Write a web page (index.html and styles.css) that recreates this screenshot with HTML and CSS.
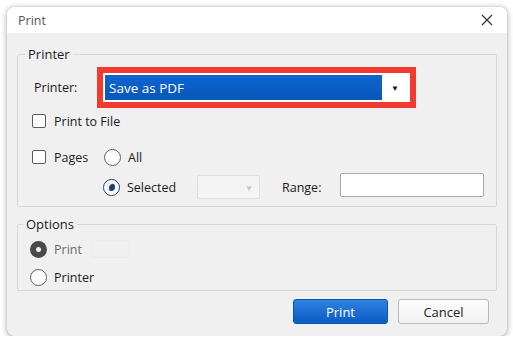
FILE: index.html
```html
<!DOCTYPE html>
<html lang="en">
<head>
  <meta charset="UTF-8" />
  <title>Print</title>
  <link rel="stylesheet" href="styles.css">
</head>
<body>
  <div class="dialog">
    <div class="titlebar">
      <span class="title">Print</span>
      <svg class="close" width="12" height="12" viewBox="0 0 12 12">
        <path d="M1 1 L11 11 M11 1 L1 11" stroke="#333" stroke-width="1.2" fill="none"/>
      </svg>
    </div>

    <div class="content">
      <fieldset class="group printer-group">
        <legend>Printer</legend>

        <div class="row printer-row">
          <span class="label printer-label">Printer:</span>
          <div class="highlight">
            <div class="select">
              <span class="select-value">Save as PDF</span>
              <span class="select-arrow">&#9660;</span>
            </div>
          </div>
        </div>

        <div class="row file-row">
          <span class="checkbox"></span>
          <span class="label">Print to File</span>
        </div>

        <div class="row pages-row">
          <span class="checkbox"></span>
          <span class="label pages-label">Pages</span>
          <span class="radio"></span>
          <span class="label">All</span>
        </div>

        <div class="row selected-row">
          <span class="radio checked"></span>
          <span class="label selected-label">Selected</span>
          <div class="mini-select"><span class="mini-arrow">&#9660;</span></div>
          <span class="label range-label">Range:</span>
          <div class="text-input"></div>
        </div>
      </fieldset>

      <fieldset class="group options-group">
        <legend>Options</legend>

        <div class="row option-row">
          <span class="radio disabled-checked"></span>
          <span class="label muted">Print</span>
          <div class="mini-box"></div>
        </div>

        <div class="row option-row">
          <span class="radio"></span>
          <span class="label">Printer</span>
        </div>
      </fieldset>

      <div class="buttons">
        <button class="btn primary">Print</button>
        <button class="btn">Cancel</button>
      </div>
    </div>
  </div>
</body>
</html>
```

FILE: styles.css
```css
:root {
  --bg: #f0f0f0;
  --line: #d8d8d8;
  --text: #1b1b1b;
  --muted: #6a6a6a;
  --blue: #0b5fc5;
  --red: #f23a31;
}

* {
  box-sizing: border-box;
  margin: 0;
  padding: 0;
}

html, body {
  background: #ffffff;
  font-family: 'Open Sans', 'Noto Sans', sans-serif;
  font-size: 12.5px;
  color: var(--text);
}

body {
  padding: 7px 6px 0 7px;
}

.dialog {
  width: 500px;
  height: 329px;
  background: var(--bg);
  border-radius: 7px;
  overflow: hidden;
  box-shadow: 0 1px 6px rgba(0, 0, 0, 0.35), 0 0 1px rgba(0, 0, 0, 0.3);
}

.titlebar {
  height: 26px;
  background: #ffffff;
  display: flex;
  align-items: center;
  justify-content: space-between;
  padding: 0 14px 0 11px;
}

.title {
  color: #555;
  font-size: 12.5px;
}

.content {
  padding: 12px 10px 0 10px;
}

.group {
  min-width: 0;
  border: 1px solid var(--line);
  border-radius: 2px;
  padding: 4px 0 0 14px;
}

.group legend {
  font-size: 13px;
  line-height: 18px;
  padding: 0 3px;
  margin-left: -7px;
}

.row {
  display: flex;
  align-items: center;
  height: 24px;
}

.label {
  font-size: 12.5px;
  white-space: nowrap;
}

.printer-row {
  height: 41px;
}

.printer-label {
  margin-left: 2px;
  width: 63px;
}

.highlight {
  width: 319px;
  height: 41px;
  border: 6px solid var(--red);
  background: #ffffff;
  padding: 2px;
  display: flex;
}

.select {
  flex: 1;
  display: flex;
  align-items: stretch;
}

.select-value {
  width: 277px;
  background: linear-gradient(#0d66cf, #0956b8);
  color: #ffffff;
  font-size: 13.5px;
  display: flex;
  align-items: center;
  padding-left: 4px;
}

.select-arrow {
  flex: 1;
  font-size: 8px;
  color: #111;
  display: flex;
  align-items: center;
  justify-content: center;
}

.checkbox {
  width: 14px;
  height: 14px;
  border: 1px solid #5c5c5c;
  border-radius: 2px;
  background: #ffffff;
  margin-right: 8px;
}

.file-row {
  margin-top: 1px;
}

.pages-row {
  margin-top: 12px;
}

.pages-label {
  width: 50px;
}

.radio {
  width: 17px;
  height: 17px;
  border-radius: 50%;
  border: 1px solid #5c5c5c;
  background: #ffffff;
  margin-right: 7px;
  position: relative;
}

.radio.checked {
  border: 1.5px solid #1b3f73;
}

.radio.checked::after {
  content: "";
  position: absolute;
  left: 3px;
  top: 3px;
  width: 8px;
  height: 8px;
  border-radius: 50%;
  background: #1b3f73;
  box-shadow: inset 2px 1px 0 #ffffff;
}

.radio.disabled-checked {
  border: none;
  background: #4a4a4a;
}

.radio.disabled-checked::after {
  content: "";
  position: absolute;
  left: 6px;
  top: 6px;
  width: 5px;
  height: 5px;
  border-radius: 50%;
  background: #f2f2f2;
}

.selected-row {
  margin-top: 5px;
  height: 26px;
  padding-left: 71px;
}

.selected-label {
  width: 70px;
}

.mini-select {
  width: 63px;
  height: 24px;
  border: 1px solid #dedede;
  border-radius: 2px;
  background: #f4f4f4;
  display: flex;
  align-items: center;
  justify-content: flex-end;
  padding-right: 6px;
}

.mini-arrow {
  font-size: 8px;
  color: #c4c4c4;
}

.range-label {
  margin-left: 22px;
  width: 58px;
}

.text-input {
  width: 144px;
  height: 24px;
  background: #ffffff;
  border: 1px solid #a8a8a8;
  border-radius: 2px;
  margin-bottom: 5px;
}

.printer-group {
  height: 162px;
}

.options-group {
  margin-top: 8px;
  padding: 5px 0 0 12px;
  height: 76px;
}

.option-row {
  height: 22px;
  margin-bottom: 6px;
}

.muted {
  color: var(--muted);
}

.mini-box {
  width: 39px;
  height: 18px;
  margin-left: 9px;
  border: 1px solid #ebebeb;
  background: #efefef;
  border-radius: 2px;
}

.buttons {
  display: flex;
  justify-content: flex-end;
  gap: 10px;
  margin-top: 8px;
  padding-right: 8px;
}

.btn {
  height: 25px;
  width: 91px;
  font-family: inherit;
  font-size: 13px;
  color: var(--text);
  background: linear-gradient(#fdfdfd, #f1f1f1);
  border: 1px solid #b9b9b9;
  border-radius: 3px;
}

.btn.primary {
  width: 95px;
  color: #ffffff;
  background: linear-gradient(#2f82e0, #0b5cc4);
  border-color: #0a54b3;
}
```
